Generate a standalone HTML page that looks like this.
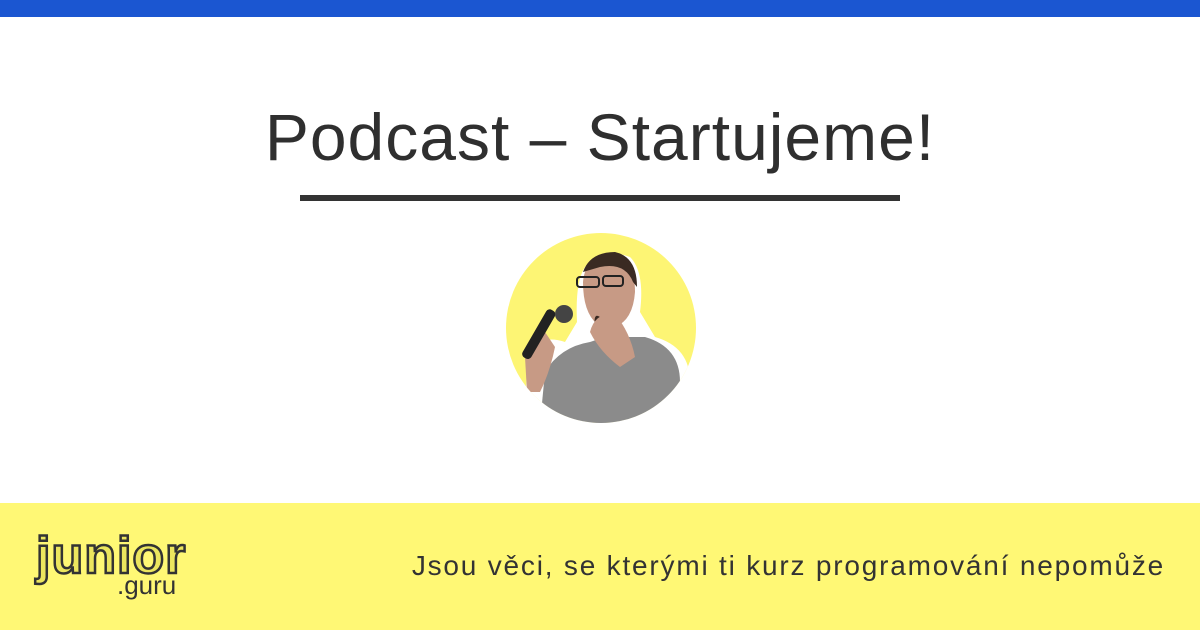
<!DOCTYPE html>
<html><head><meta charset="utf-8"><style>
*{margin:0;padding:0}
body{width:1200px;height:630px;background:#fff;position:relative;overflow:hidden;font-family:"Liberation Sans",sans-serif;color:#333}
.top{position:absolute;left:0;top:0;width:1200px;height:17px;background:#1b56d1}
h1{position:absolute;left:0;width:1200px;top:99px;text-align:center;font-weight:400;font-size:66px;letter-spacing:1px;color:#2f2f2f}
.line{position:absolute;left:300px;top:195px;width:600px;height:6px;background:#333}
.foot{position:absolute;left:0;top:503px;width:1200px;height:127px;background:#fff875}
.tag{position:absolute;right:35px;top:550px;font-size:28px;letter-spacing:1.8px;color:#333}
.logo{position:absolute;left:36px;top:526px;font-family:"Liberation Sans",sans-serif;font-weight:700;font-size:52px;color:#ece65e;-webkit-text-stroke:2.5px #333;letter-spacing:1px}
.guru{position:absolute;left:117px;top:570px;font-size:26px;color:#333}
</style></head><body>
<div class="top"></div>
<h1>Podcast – Startujeme!</h1>
<div class="line"></div>
<svg style="position:absolute;left:505px;top:232px" width="192" height="192" viewBox="0 0 192 192">
<defs><clipPath id="c"><circle cx="96" cy="96" r="95"/></clipPath></defs>
<circle cx="96" cy="96" r="95" fill="#fdf574"/>
<g clip-path="url(#c)">
<path d="M20 192 L22 130 Q30 100 60 110 L72 90 Q70 50 80 35 Q100 15 125 25 Q140 40 135 80 L150 105 Q185 115 185 150 L185 192Z" fill="#fff"/>
<path d="M35 192 L40 140 Q55 115 85 110 L100 105 L140 105 Q175 115 175 150 L178 192Z" fill="#8b8b8b"/>
<path d="M78 50 Q80 25 105 22 Q130 25 130 60 Q128 88 110 95 L92 92 Q78 80 78 50Z" fill="#c79a85"/>
<path d="M78 40 Q85 20 110 20 Q132 25 132 55 L128 50 Q120 30 95 35 Z" fill="#3a2a22"/>
<rect x="72" y="45" width="22" height="10" rx="3" fill="none" stroke="#222" stroke-width="2"/>
<rect x="98" y="44" width="20" height="10" rx="3" fill="none" stroke="#222" stroke-width="2"/>
<path d="M90 95 Q88 80 95 85 L105 100 Z" fill="#3a2a22"/>
<path d="M85 100 Q90 80 110 82 Q125 100 130 125 L115 135 Q95 120 85 100Z" fill="#c79a85"/>
<path d="M20 125 Q25 100 40 100 L50 115 Q45 140 35 160 L22 160Z" fill="#c79a85"/>
<rect x="30" y="75" width="10" height="55" rx="4" fill="#222" transform="rotate(30 35 100)"/>
<circle cx="59" cy="82" r="9" fill="#444"/>
</g>
</svg>
<div class="foot"></div>
<div class="logo">junior</div>
<div class="guru">.guru</div>
<div class="tag">Jsou věci, se kterými ti kurz programování nepomůže</div>
</body></html>
